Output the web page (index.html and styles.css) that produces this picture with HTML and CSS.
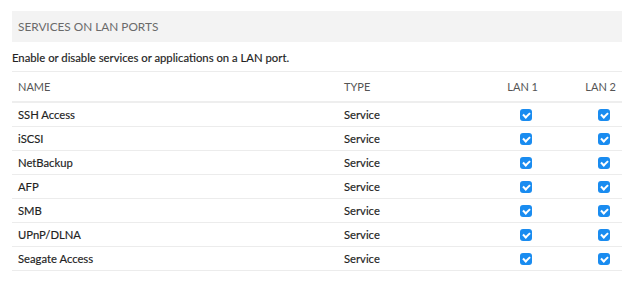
FILE: index.html
```html
<!DOCTYPE html>
<html>
<head>
<meta charset="utf-8">
<link rel="stylesheet" href="styles.css">
</head>
<body>
<div class="panel">
  <div class="panel-title">SERVICES ON LAN PORTS</div>
  <p class="desc">Enable or disable services or applications on a LAN port.</p>
  <div class="table">
    <div class="row head">
      <div class="c-name">NAME</div>
      <div class="c-type">TYPE</div>
      <div class="c-lan">LAN 1</div>
      <div class="c-lan">LAN 2</div>
    </div>
    <div class="row">
      <div class="c-name">SSH Access</div><div class="c-type">Service</div>
      <div class="c-lan"><span class="cb"></span></div><div class="c-lan"><span class="cb"></span></div>
    </div>
    <div class="row">
      <div class="c-name">iSCSI</div><div class="c-type">Service</div>
      <div class="c-lan"><span class="cb"></span></div><div class="c-lan"><span class="cb"></span></div>
    </div>
    <div class="row">
      <div class="c-name">NetBackup</div><div class="c-type">Service</div>
      <div class="c-lan"><span class="cb"></span></div><div class="c-lan"><span class="cb"></span></div>
    </div>
    <div class="row">
      <div class="c-name">AFP</div><div class="c-type">Service</div>
      <div class="c-lan"><span class="cb"></span></div><div class="c-lan"><span class="cb"></span></div>
    </div>
    <div class="row">
      <div class="c-name">SMB</div><div class="c-type">Service</div>
      <div class="c-lan"><span class="cb"></span></div><div class="c-lan"><span class="cb"></span></div>
    </div>
    <div class="row">
      <div class="c-name">UPnP/DLNA</div><div class="c-type">Service</div>
      <div class="c-lan"><span class="cb"></span></div><div class="c-lan"><span class="cb"></span></div>
    </div>
    <div class="row">
      <div class="c-name">Seagate Access</div><div class="c-type">Service</div>
      <div class="c-lan"><span class="cb"></span></div><div class="c-lan"><span class="cb"></span></div>
    </div>
  </div>
</div>
</body>
</html>
```
FILE: styles.css
```css
html, body {
  margin: 0;
  padding: 0;
  background: #fff;
}
body {
  font-family: Lato, "Open Sans", sans-serif;
  color: #333;
}
.panel {
  padding: 11px 18px 0 12px;
}
.panel-title {
  height: 31px;
  background: #f3f3f3;
  padding-left: 6px;
  display: flex;
  align-items: center;
  font-size: 11.8px;
  color: #6a6a6a;
  font-weight: 400;
}
.desc {
  margin: 0;
  height: 28px;
  display: flex;
  align-items: center;
  font-size: 11.3px;
  font-weight: 400;
  color: #222;
  padding-top: 1px;
  border-bottom: 1px solid #ececec;
  -webkit-text-stroke: 0.15px #222;
}
.row {
  display: grid;
  grid-template-columns: 332px 122px 78px 78px;
  height: 23px;
  align-items: center;
  border-bottom: 1px solid #ececec;
  font-size: 11.25px;
  font-weight: 400;
  color: #222;
  -webkit-text-stroke: 0.15px #222;
}
.row.head {
  height: 29px;
  font-size: 11px;
  color: #555;
  -webkit-text-stroke: 0;
  border-bottom: 2px solid #eeeeee;
}
.c-name {
  padding-left: 6px;
}
.c-lan {
  padding-right: 6px;
  display: flex;
  justify-content: flex-end;
}
.cb {
  display: block;
  width: 12px;
  height: 12px;
  margin-right: 6px;
  border-radius: 3px;
  background: #1a8cf0;
  position: relative;
}
.cb::after {
  content: "";
  position: absolute;
  left: 4px;
  top: 2px;
  width: 3px;
  height: 5px;
  border: solid #fff;
  border-width: 0 2px 2px 0;
  transform: rotate(45deg);
}
```
